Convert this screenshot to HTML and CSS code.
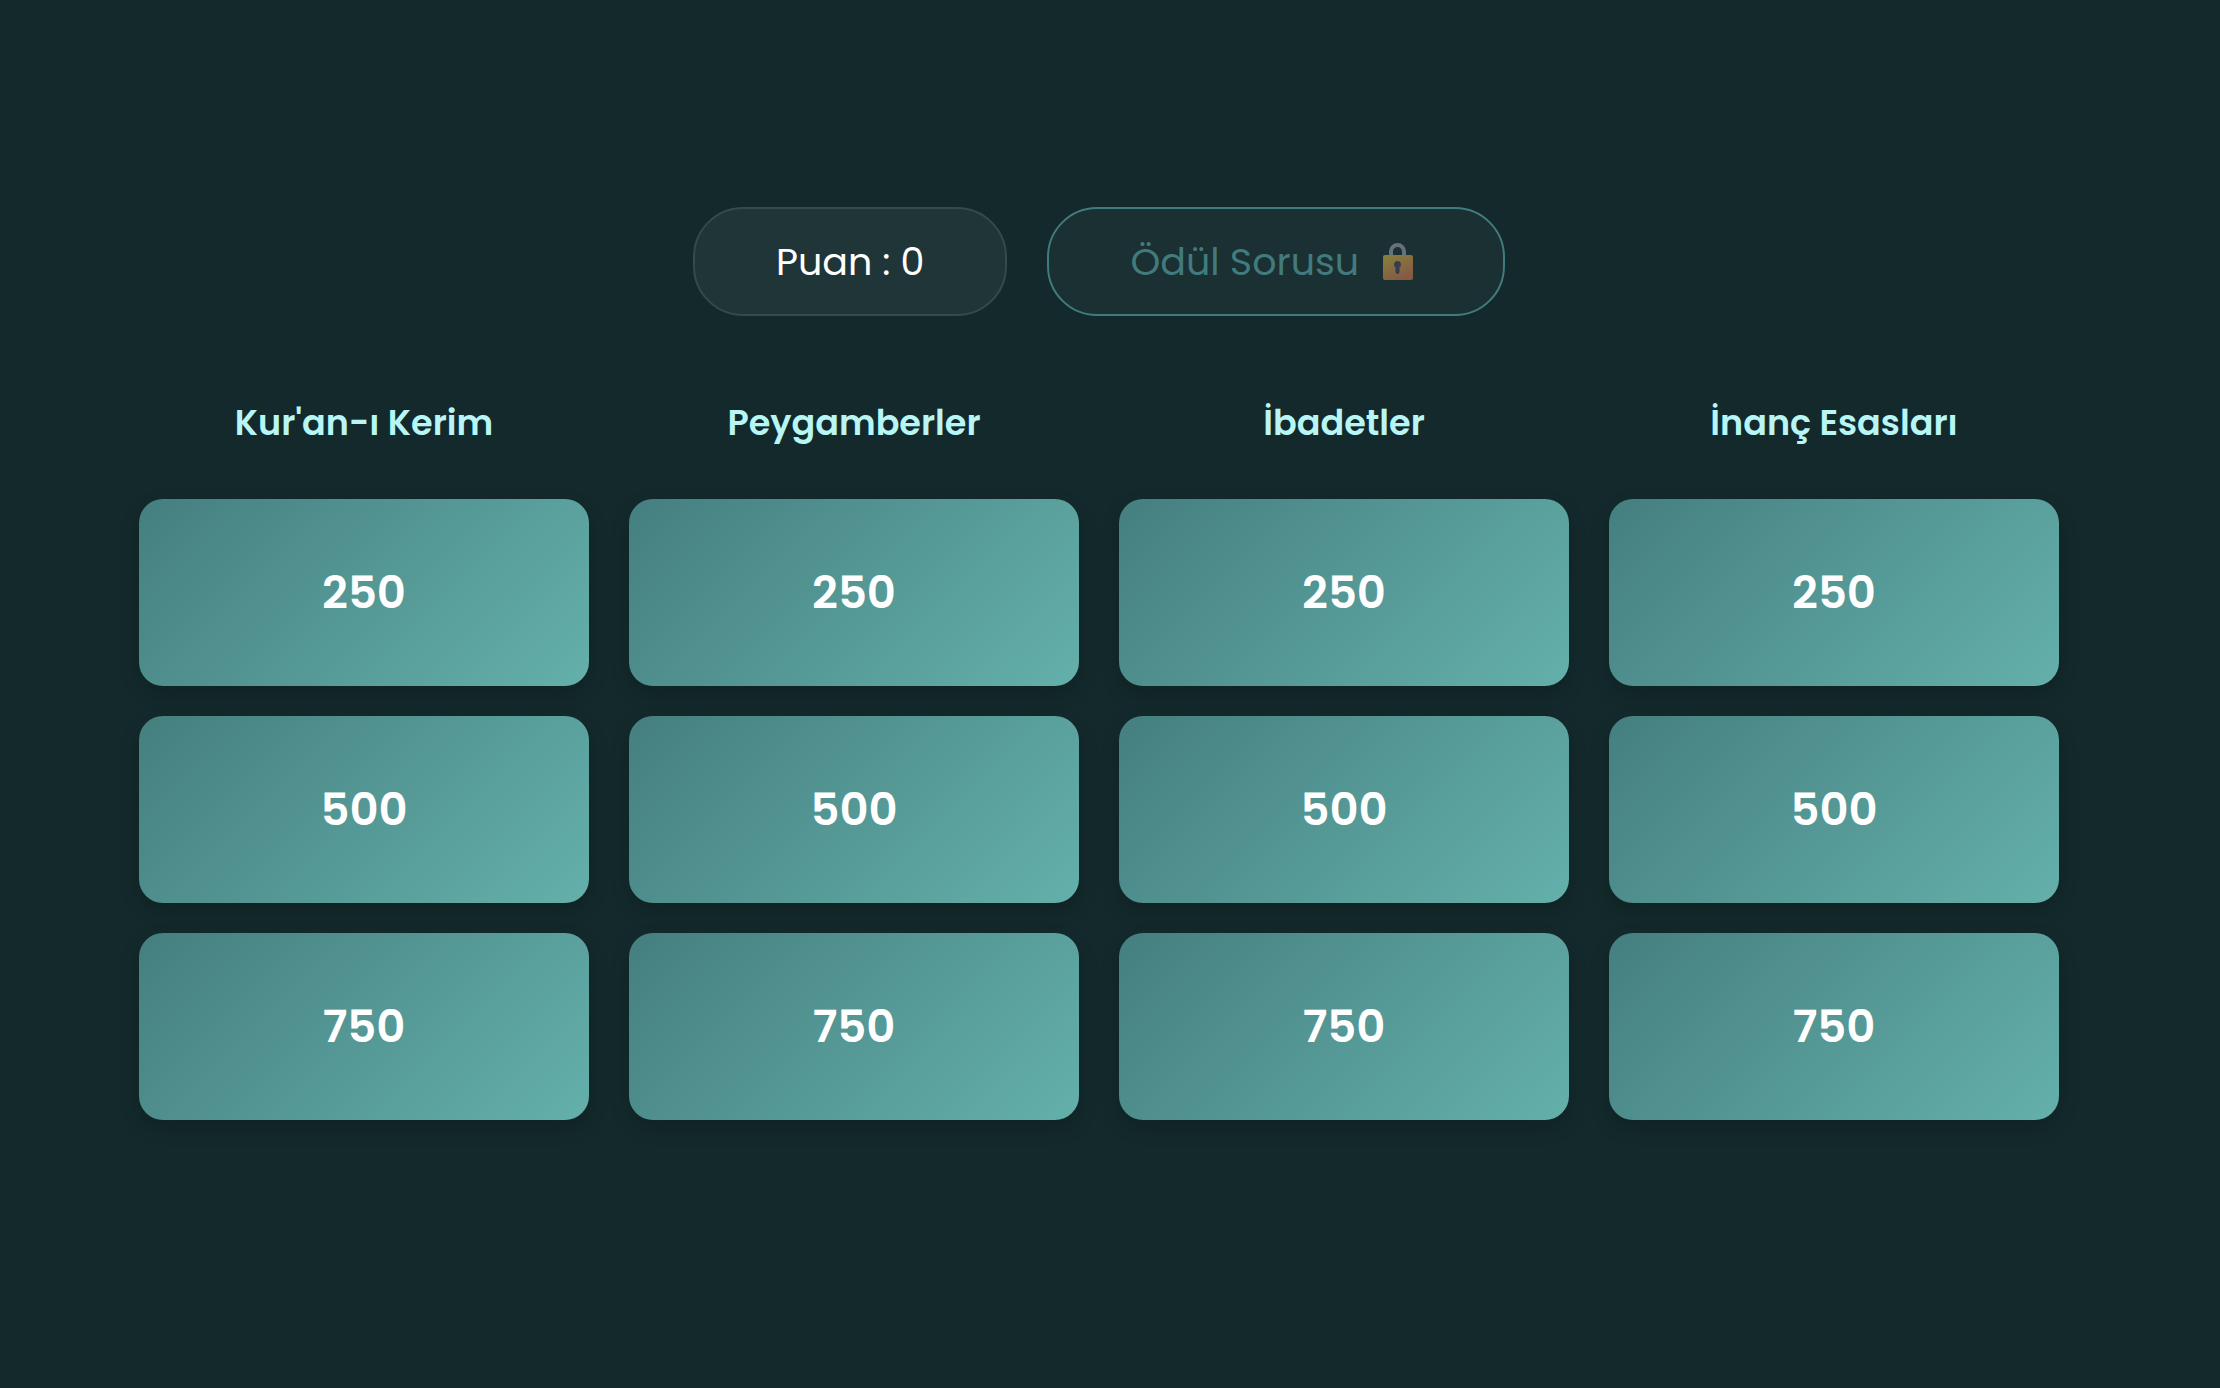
FILE: index.html
```html
<!DOCTYPE html>
<html lang="tr">
<head>
    <meta charset="UTF-8">
    <meta name="viewport" content="width=device-width, initial-scale=1.0">
    <title>Bilgi Yarışması</title>
    <link rel="stylesheet" href="styles.css">
</head>
<body>
    <!-- Puan ve ödül sorusu -->
    <header class="top-bar">
        <div class="score">Puan : 0</div>
        <button class="bonus-button" id="bonusButton" disabled>
            Ödül Sorusu
            <svg class="lock" viewBox="0 0 30 37" aria-hidden="true">
                <defs>
                    <linearGradient id="lockBody" x1="0" y1="0" x2="0.5" y2="1">
                        <stop offset="0" stop-color="#87803f"/>
                        <stop offset="1" stop-color="#855b43"/>
                    </linearGradient>
                </defs>
                <path d="M8 13V8.500a6.500 6.500 0 0 1 13 0V13" fill="none" stroke="#66717a" stroke-width="4"/>
                <rect x="0" y="12" width="30" height="25" rx="2" fill="url(#lockBody)"/>
                <path d="M14.500 18a3.500 3.500 0 0 1 2 6.400V29a2 2 0 0 1-4 0v-4.600a3.500 3.500 0 0 1 2-6.400z" fill="#343e50"/>
            </svg>
        </button>
    </header>

    <!-- Soru tablosu -->
    <main class="board">
        <section class="category">
            <h2>Kur'an-ı Kerim</h2>
            <button class="card">250</button>
            <button class="card">500</button>
            <button class="card">750</button>
        </section>
        <section class="category">
            <h2>Peygamberler</h2>
            <button class="card">250</button>
            <button class="card">500</button>
            <button class="card">750</button>
        </section>
        <section class="category">
            <h2>İbadetler</h2>
            <button class="card">250</button>
            <button class="card">500</button>
            <button class="card">750</button>
        </section>
        <section class="category">
            <h2>İnanç Esasları</h2>
            <button class="card">250</button>
            <button class="card">500</button>
            <button class="card">750</button>
        </section>
    </main>
</body>
</html>
```
FILE: styles.css
```css
* {
    box-sizing: border-box;
    margin: 0;
    padding: 0;
}
body {
    font-family: Poppins, Inter, sans-serif;
    min-height: 100vh;
    padding: 0 62px 61px 40px;
    display: flex;
    flex-direction: column;
    justify-content: center;
    align-items: center;
    background-color: #13292b;
    color: #fff;
}
button {
    font-family: inherit;
    cursor: pointer;
}
.top-bar {
    display: flex;
    justify-content: center;
    gap: 40px;
    margin-bottom: 80px;
}
.score, .bonus-button {
    display: flex;
    align-items: center;
    justify-content: center;
    padding: 22px 81px;
    border: 2px solid #354a4c;
    border-radius: 50px;
    background-color: #1f3537;
    font-size: 38px;
    font-weight: 400;
    line-height: 61px;
    white-space: nowrap;
}
.bonus-button {
    border-color: #417b7d;
    background-color: #1b3032;
    color: #417b7d;
    cursor: not-allowed;
}
.lock {
    width: 30px;
    height: 37px;
    margin: 0 9px 0 24px;
}
.board {
    width: 100%;
    max-width: 1920px;
    display: grid;
    grid-template-columns: repeat(4, 1fr);
    gap: 40px;
}
.category {
    display: flex;
    flex-direction: column;
    gap: 30px;
}
.category h2 {
    margin-bottom: 19px;
    color: #b8f5f5;
    font-size: 35px;
    font-weight: 600;
    line-height: 54px;
    text-align: center;
}
.card {
    padding: 60px 20px;
    border: none;
    border-radius: 24px;
    background: linear-gradient(135deg, #457f80, #64b0ab);
    box-shadow: 0 8px 20px rgba(0, 0, 0, 0.15);
    color: #fff;
    font-size: 45px;
    font-weight: 600;
    line-height: 67px;
}
.card:hover {
    background: linear-gradient(135deg, #4c8c8d, #6fbdb8);
}
```
